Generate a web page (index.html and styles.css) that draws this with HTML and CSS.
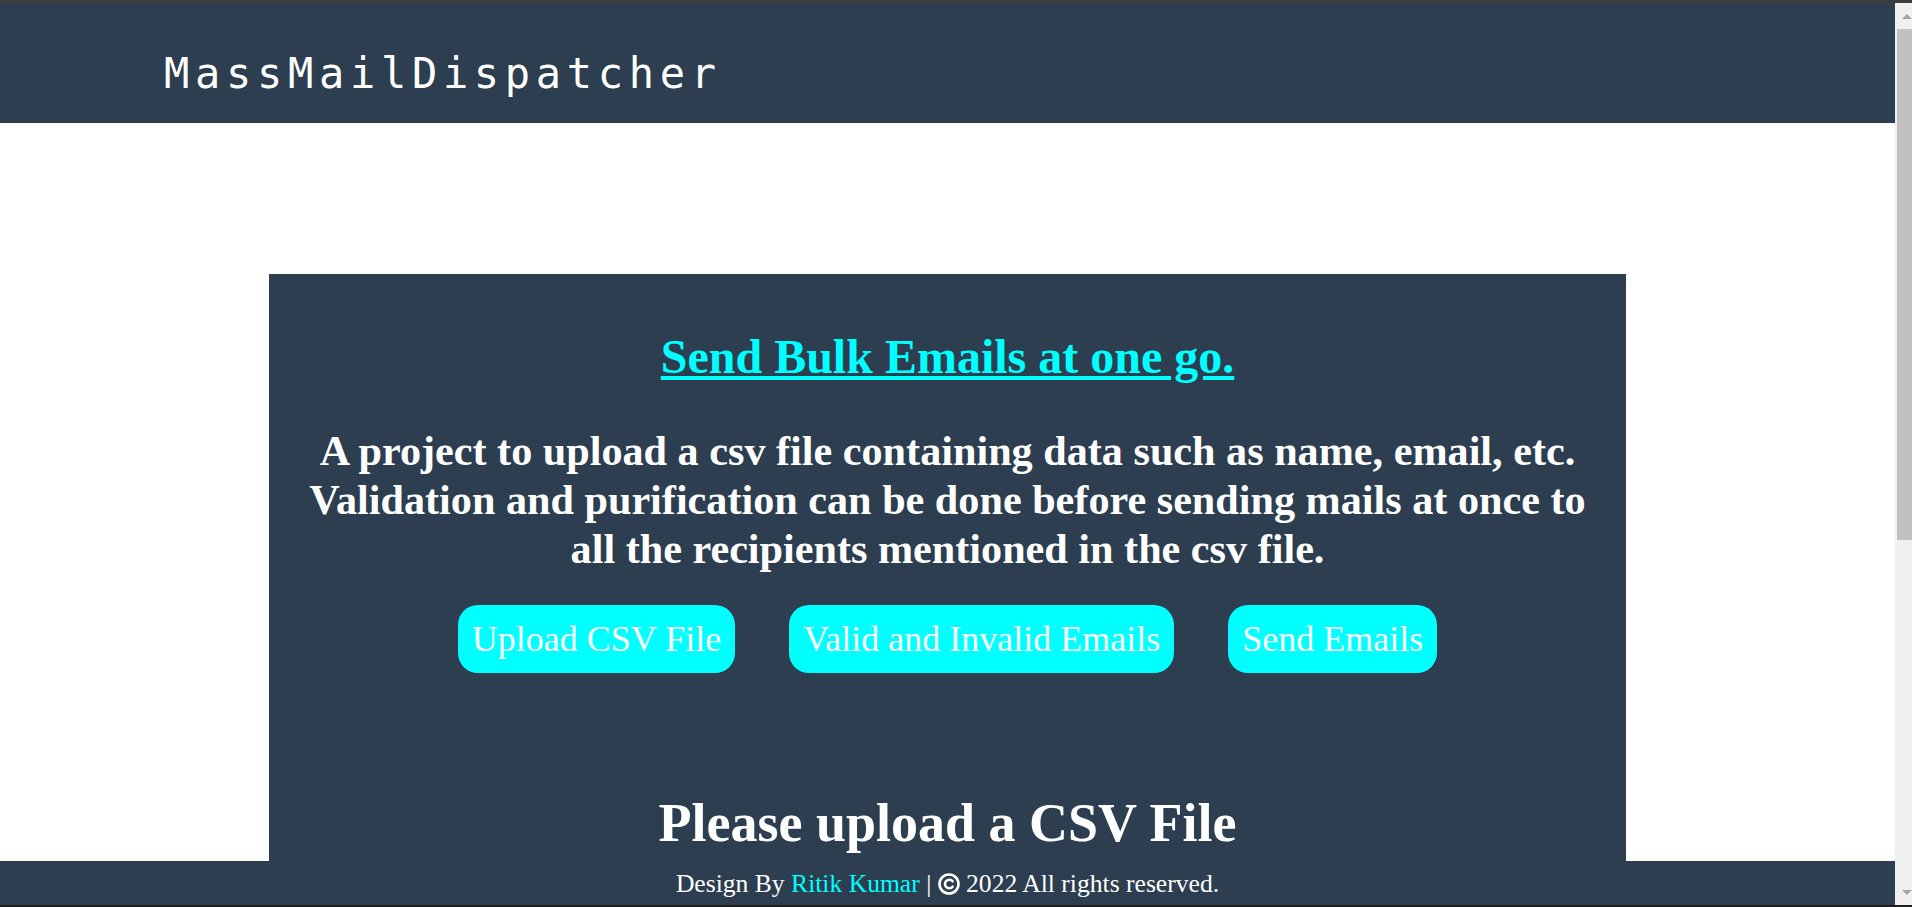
FILE: index.html
```html
<!DOCTYPE html>
<html lang="en">
<head>
<meta charset="utf-8">
<title>MassMailDispatcher</title>
<link rel="stylesheet" href="styles.css">
</head>
<body>
  <div class="frame-top"></div>
  <div class="window">
    <div class="viewport">
      <header class="site-header">
        <span class="brand">MassMailDispatcher</span>
      </header>
      <main class="content">
        <section class="hero">
          <h1 class="hero-title"><a href="#">Send Bulk Emails at one go.</a></h1>
          <p class="hero-text">A project to upload a csv file containing data such as name, email, etc. Validation and purification can be done before sending mails at once to all the recipients mentioned in the csv file.</p>
          <div class="actions">
            <button class="btn">Upload CSV File</button>
            <button class="btn">Valid and Invalid Emails</button>
            <button class="btn">Send Emails</button>
          </div>
          <h2 class="upload-title">Please upload a CSV File</h2>
        </section>
      </main>
      <footer class="site-footer">
        Design By <a href="#" class="author">Ritik Kumar</a> | <svg class="copy-icon" viewBox="0 0 22 22" width="22" height="22" aria-hidden="true"><circle cx="11" cy="11" r="9.5" fill="none" stroke="#fff" stroke-width="2.6"/><path d="M14.6 8.3 A4.3 4.3 0 1 0 14.6 13.7" fill="none" stroke="#fff" stroke-width="2.6" stroke-linecap="round"/></svg> 2022 All rights reserved.
      </footer>
    </div>
    <div class="scrollbar">
      <div class="sb-btn sb-btn-up"><span class="arrow-up"></span></div>
      <div class="sb-track"><div class="sb-thumb"></div></div>
      <div class="sb-btn sb-btn-down"><span class="arrow-down"></span></div>
    </div>
  </div>
  <div class="frame-bottom"></div>
</body>
</html>
```

FILE: styles.css
```css
html, body {
  height: 100%;
}

body {
  margin: 0;
  display: flex;
  flex-direction: column;
  height: 100vh;
  overflow: hidden;
  background: #ffffff;
  font-family: "Liberation Serif", "Times New Roman", serif;
}

.frame-top {
  flex: none;
  height: 3px;
  background: #3d3d3d;
}

.frame-bottom {
  flex: none;
  height: 2px;
  background: #1f1f1f;
}

.window {
  flex: 1;
  min-height: 0;
  display: flex;
}

.viewport {
  flex: 1;
  position: relative;
  overflow: hidden;
  background: #ffffff;
}

/* Header */
.site-header {
  height: 120px;
  box-sizing: border-box;
  padding: 46px 0 0 164px;
  background: #2c3e50;
}

.brand {
  font-family: "DejaVu Sans Mono", monospace;
  font-size: 42px;
  letter-spacing: 5.7px;
  color: #ffffff;
}

/* Hero card */
.hero {
  width: 70%;
  margin: 151px auto 0;
  padding: 55px 15px 300px;
  background: #2c3e50;
  color: #ffffff;
  text-align: center;
}

.hero-title {
  margin: 0;
  font-size: 48px;
  font-weight: bold;
}

.hero-title a {
  color: #00ffff;
  text-decoration: underline;
}

.hero-text {
  margin: 42px 15px 0;
  font-size: 42.2px;
  line-height: 49px;
  font-weight: bold;
}

.actions {
  display: flex;
  justify-content: center;
  gap: 54px;
  margin-top: 32px;
}

.btn {
  font-family: "Liberation Serif", "Times New Roman", serif;
  font-size: 36px;
  color: #ffffff;
  background: #00ffff;
  border: 0;
  border-radius: 20px;
  padding: 13px 14px;
  cursor: pointer;
}

.upload-title {
  margin: 119px 0 0;
  font-size: 54px;
  font-weight: bold;
}

/* Footer */
.site-footer {
  position: absolute;
  left: 0;
  right: 0;
  bottom: 0;
  padding: 8px 0 6px;
  background: #2c3e50;
  color: #ffffff;
  text-align: center;
  font-size: 25.6px;
}

.author {
  color: #00ffff;
  text-decoration: none;
}

.copy-icon {
  vertical-align: -3px;
}

/* Scrollbar */
.scrollbar {
  flex: none;
  width: 17px;
  display: flex;
  flex-direction: column;
  background: #f0f0f0;
}

.sb-btn {
  flex: none;
  height: 17px;
  box-sizing: border-box;
}

.sb-btn-up {
  padding-top: 11px;
}

.sb-btn-down {
  padding-top: 2px;
}

.arrow-up,
.arrow-down {
  display: block;
  width: 0;
  height: 0;
  margin-left: 7px;
  border-left: 5px solid transparent;
  border-right: 5px solid transparent;
}

.arrow-up {
  border-bottom: 5px solid #a3a3a3;
}

.arrow-down {
  border-top: 5px solid #a3a3a3;
}

.sb-track {
  flex: 1;
  padding: 9px 0 0 2px;
}

.sb-thumb {
  height: 511px;
  background: #c1c1c1;
}
```
